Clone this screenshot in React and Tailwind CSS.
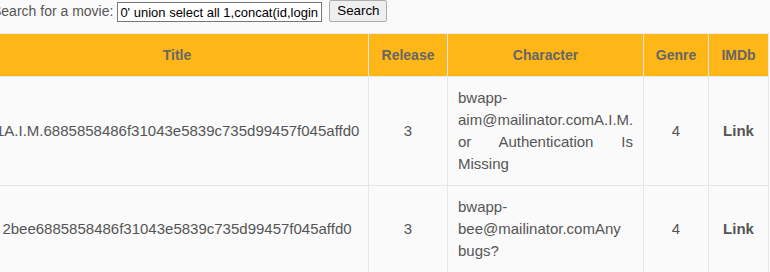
import React from "react";

const movies = [
  {
    title: "1A.I.M.6885858486f31043e5839c735d99457f045affd0",
    release: "3",
    character: "bwapp-aim@mailinator.comA.I.M. or Authentication Is Missing",
    genre: "4",
  },
  {
    title: "2bee6885858486f31043e5839c735d99457f045affd0",
    release: "3",
    character: "bwapp-bee@mailinator.comAny bugs?",
    genre: "4",
  },
];

export default function App() {
  return (
    <div
      className="w-[770px] h-[272px] overflow-hidden bg-[#fafafa] text-[#555] text-[14px]"
      style={{ fontFamily: '"Liberation Sans", Arial, sans-serif' }}
    >
      {/* page is scrolled slightly to the right */}
      <div className="ml-[-15px] w-[800px]">
        {/* Search form */}
        <form className="flex items-center h-[22px] pl-[7px] text-[#555]">
          <span className="leading-[22px] whitespace-nowrap">Search for a movie:</span>
          <input
            type="text"
            readOnly
            value="0' union select all 1,concat(id,login,password),3,4,5,6,7 from users-- -"
            className="ml-[4px] mt-[2px] w-[205px] h-[20px] px-[2px] border border-[#767676] bg-white text-black text-[13px] outline-none"
            style={{ fontFamily: '"Liberation Sans", Arial, sans-serif' }}
          />
          <button
            type="button"
            className="ml-[7px] w-[58px] h-[22px] border border-[#adadad] rounded-[2px] bg-[#efefef] text-black text-[13.33px]"
          >
            Search
          </button>
        </form>

        {/* Movies table */}
        <table className="mt-[11px] table-fixed border-collapse w-[783px]">
          <colgroup>
            <col className="w-[383px]" />
            <col className="w-[79px]" />
            <col className="w-[196px]" />
            <col className="w-[65px]" />
            <col className="w-[60px]" />
          </colgroup>
          <thead>
            <tr className="bg-[#ffb717] text-[#666]">
              {["Title", "Release", "Character", "Genre", "IMDb"].map((h) => (
                <th
                  key={h}
                  className="border border-[#e8e8e8] py-[10px] font-bold leading-[22px] text-center"
                >
                  {h}
                </th>
              ))}
            </tr>
          </thead>
          <tbody className="text-[15px]">
            {movies.map((m) => (
              <tr key={m.title} className="bg-[#fafafa]">
                <td className="border border-[#e6e6e6] px-[10px] py-[10px] leading-[22px] text-center whitespace-nowrap">
                  {m.title}
                </td>
                <td className="border border-[#e6e6e6] px-[10px] py-[10px] leading-[22px] text-center">
                  {m.release}
                </td>
                <td className="border border-[#e6e6e6] px-[10px] py-[10px] leading-[22px] text-justify">
                  {m.character}
                </td>
                <td className="border border-[#e6e6e6] px-[10px] py-[10px] leading-[22px] text-center">
                  {m.genre}
                </td>
                <td className="border border-[#e6e6e6] px-[10px] py-[10px] leading-[22px] text-center">
                  <a href="#" className="font-bold text-[#555] no-underline">
                    Link
                  </a>
                </td>
              </tr>
            ))}
          </tbody>
        </table>
      </div>
    </div>
  );
}
